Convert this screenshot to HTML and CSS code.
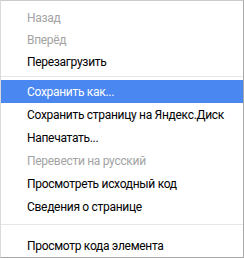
FILE: index.html
```html
<!DOCTYPE html>
<html lang="ru">
<head>
<meta charset="utf-8">
<link rel="stylesheet" href="styles.css">
</head>
<body>
<div class="menu">
  <div class="group top">
    <div class="item disabled">Назад</div>
    <div class="item disabled">Вперёд</div>
    <div class="item">Перезагрузить</div>
  </div>
  <div class="sep"></div>
  <div class="group">
    <div class="item active">Сохранить как...</div>
    <div class="item">Сохранить страницу на Яндекс.Диск</div>
    <div class="item">Напечатать...</div>
    <div class="item disabled">Перевести на русский</div>
    <div class="item">Просмотреть исходный код</div>
    <div class="item">Сведения о странице</div>
  </div>
  <div class="sep sep-low"></div>
  <div class="group">
    <div class="item">Просмотр кода элемента</div>
  </div>
</div>
</body>
</html>
```
FILE: styles.css
```css
html, body {
  margin: 0;
  padding: 0;
  background: #ffffff;
}
.menu {
  box-sizing: border-box;
  width: 244px;
  height: 258px;
  overflow: hidden;
  background: #ffffff;
  border-top: 1px solid #cbcbcb;
  border-left: 1px solid #dadada;
  border-right: 1px solid #a9a9a9;
  border-bottom: 1px solid #a9a9a9;
  padding-top: 6px;
  display: flex;
  flex-direction: column;
  font-family: Roboto, "Noto Sans", sans-serif;
  font-size: 12px;
  letter-spacing: -0.3px;
  color: #000000;
}
.group {
  display: flex;
  flex-direction: column;
}
.item {
  height: 23px;
  line-height: 24px;
  padding-left: 26px;
  white-space: nowrap;
}
.top .item {
  height: 22px;
  line-height: 23px;
}
.item.disabled {
  color: #a3a3a3;
}
.item.active {
  background: #4a87f0;
  color: #ffffff;
}
.sep {
  height: 1px;
  background: #e6e6e6;
  margin: 3px 0 3px;
}
.sep.sep-low {
  margin: 6px 0 9px;
}
```
